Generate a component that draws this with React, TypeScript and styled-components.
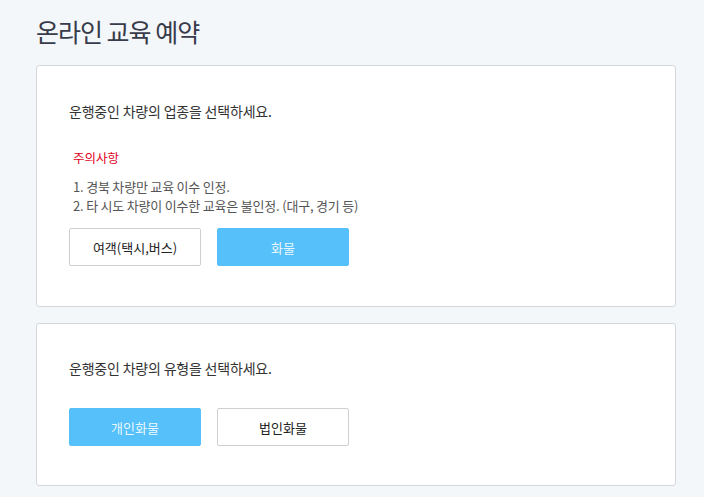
import styled, { createGlobalStyle } from 'styled-components';

const GlobalStyle = createGlobalStyle`
  body {
    margin: 0;
    background: #f4f7fa;
    font-family: 'Noto Sans CJK KR', 'Noto Sans', sans-serif;
  }
`;

const Page = styled.div`
  padding: 12px 28px 10px 36px;
  width: 640px;
`;

const Title = styled.h1`
  margin: 0 0 14px;
  font-size: 25px;
  line-height: 39px;
  font-weight: 400;
  color: #383b4a;
  letter-spacing: -1px;
`;

const Card = styled.section<{ $bottom: number; $top: number }>`
  background: #fff;
  border: 1px solid #d3d6da;
  border-radius: 3px;
  padding: ${(p) => p.$top}px 32px ${(p) => p.$bottom}px;
  margin-bottom: 16px;
`;

const Lead = styled.p`
  margin: 0;
  font-size: 14px;
  line-height: 20px;
  color: #333;
  letter-spacing: -0.2px;
`;

const Notice = styled.div`
  margin: 27px 0 0 4px;
`;

const NoticeTitle = styled.div`
  font-size: 12.5px;
  line-height: 20px;
  color: #e0001b;
`;

const NoticeList = styled.ol`
  margin: 9px 0 0;
  padding: 0;
  list-style: none;
  font-size: 13px;
  line-height: 19px;
  color: #555;
  letter-spacing: -0.2px;
`;

const Buttons = styled.div<{ $gap: number }>`
  display: flex;
  gap: 16px;
  margin-top: ${(p) => p.$gap}px;
`;

const Choice = styled.button<{ $active?: boolean }>`
  width: 132px;
  height: 38px;
  font-family: inherit;
  font-size: 13px;
  border-radius: 2px;
  cursor: pointer;
  border: 1px solid ${(p) => (p.$active ? '#55c0fa' : '#cfcfcf')};
  background: ${(p) => (p.$active ? '#55c0fa' : '#fff')};
  color: ${(p) => (p.$active ? 'rgba(255,255,255,0.9)' : '#222')};
`;

export default function App() {
  return (
    <>
      <GlobalStyle />
      <Page>
        <Title>온라인 교육 예약</Title>
        <Card $top={35} $bottom={40}>
          <Lead>운행중인 차량의 업종을 선택하세요.</Lead>
          <Notice>
            <NoticeTitle>주의사항</NoticeTitle>
            <NoticeList>
              <li>1. 경북 차량만 교육 이수 인정.</li>
              <li>2. 타 시도 차량이 이수한 교육은 불인정. (대구, 경기 등)</li>
            </NoticeList>
          </Notice>
          <Buttons $gap={13}>
            <Choice>여객(택시,버스)</Choice>
            <Choice $active>화물</Choice>
          </Buttons>
        </Card>
        <Card $top={34} $bottom={39}>
          <Lead>운행중인 차량의 유형을 선택하세요.</Lead>
          <Buttons $gap={30}>
            <Choice $active>개인화물</Choice>
            <Choice>법인화물</Choice>
          </Buttons>
        </Card>
      </Page>
    </>
  );
}
